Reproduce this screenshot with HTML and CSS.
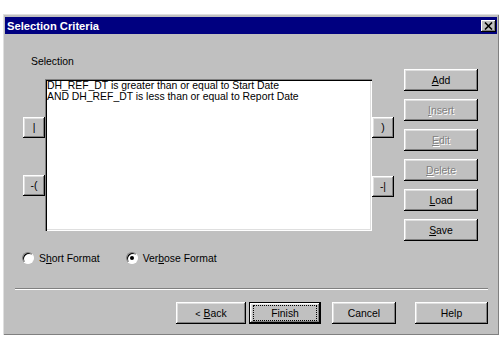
FILE: index.html
```html
<!DOCTYPE html>
<html>
<head>
<meta charset="utf-8">
<link rel="stylesheet" href="styles.css">
</head>
<body>
<div class="window">
  <div class="titlebar">
    <span class="title">Selection Criteria</span>
    <span class="close">
      <svg width="9" height="8" viewBox="0 0 9 8"><path d="M1 0.5 L8 7.5 M8 0.5 L1 7.5" stroke="#000" stroke-width="1.6" fill="none"/></svg>
    </span>
  </div>
  <div class="content">
    <div class="top">
      <div class="leftarea">
        <div class="label">Selection</div>
        <div class="listrow">
          <div class="sidebtns">
            <div class="btn small b1">|</div>
            <div class="btn small b2">-(</div>
          </div>
          <div class="list">
            <div class="line">DH_REF_DT is greater than or equal to Start Date</div>
            <div class="line">AND DH_REF_DT is less than or equal to Report Date</div>
          </div>
          <div class="sidebtns">
            <div class="btn small b1">)</div>
            <div class="btn small b2r">-|</div>
          </div>
        </div>
      </div>
      <div class="cmds">
        <div class="btn cmd"><span><u>A</u>dd</span></div>
        <div class="btn cmd disabled"><span><u>I</u>nsert</span></div>
        <div class="btn cmd disabled"><span><u>E</u>dit</span></div>
        <div class="btn cmd disabled"><span><u>D</u>elete</span></div>
        <div class="btn cmd"><span><u>L</u>oad</span></div>
        <div class="btn cmd"><span><u>S</u>ave</span></div>
      </div>
    </div>
    <div class="radios">
      <div class="radio"><span class="circle"></span><span>S<u>h</u>ort Format</span></div>
      <div class="radio r2"><span class="circle checked"></span><span>Ver<u>b</u>ose Format</span></div>
    </div>
    <div class="sep"></div>
    <div class="bottom">
      <div class="btn bb back"><span><span class="lt">&lt;</span> <u>B</u>ack</span></div>
      <div class="btn bb finish default"><span class="focus">Finish</span></div>
      <div class="btn bb cancel">Cancel</div>
      <div class="btn bb help">Help</div>
    </div>
  </div>
</div>
</body>
</html>
```
FILE: styles.css
```css
html, body {
  margin: 0;
  padding: 0;
  background: #ffffff;
}
body {
  font-family: "Liberation Sans", Arial, sans-serif;
  font-size: 10.4px;
  color: #000;
}
.window {
  margin-left: 3px;
  margin-top: 14px;
  width: 496px;
  height: 321px;
  box-sizing: border-box;
  padding: 3px 2px 2px 2px;
  background: #c0c0c0;
  box-shadow: inset 1px 1px #dfdfdf, inset -1px -1px #808080;
}
.titlebar {
  height: 17px;
  background: #000080;
  display: flex;
  align-items: center;
  justify-content: space-between;
  padding: 0 1px 0 2px;
}
.title {
  color: #fff;
  font-weight: bold;
  font-size: 11.2px;
}
.close {
  width: 15px;
  height: 12px;
  background: #c0c0c0;
  box-shadow: inset -1px -1px #000, inset 1px 1px #fff, inset -2px -2px #808080;
  display: flex;
  align-items: center;
  justify-content: center;
}
.btn {
  background: #c0c0c0;
  box-shadow: inset -1px -1px #000, inset 1px 1px #fff, inset -2px -2px #808080, inset 2px 2px #dfdfdf;
  display: flex;
  align-items: center;
  justify-content: center;
  height: 22px;
  box-sizing: border-box;
}
.top {
  display: flex;
  padding-left: 18px;
  align-items: flex-start;
}
.label {
  margin-top: 21px;
  margin-left: 8px;
  height: 13px;
  line-height: 13px;
}
.listrow {
  margin-top: 11px;
  display: flex;
  height: 152px;
}
.sidebtns {
  width: 22px;
  display: flex;
  flex-direction: column;
}
.small {
  width: 22px;
  height: 21px;
}
.b1 { margin-top: 38px; }
.b2 { margin-top: 37px; }
.b2r { margin-top: 38px; }
.list {
  width: 327px;
  height: 152px;
  box-sizing: border-box;
  background: #fff;
  box-shadow: inset 1px 1px #808080, inset 2px 2px #000, inset -1px -1px #fff, inset -2px -2px #dfdfdf;
  padding: 1px 0 0 2px;
}
.line {
  height: 11px;
  line-height: 11px;
  white-space: nowrap;
}
.cmds {
  margin-left: 10px;
  margin-top: 35px;
  display: flex;
  flex-direction: column;
  gap: 8px;
}
.cmd {
  width: 74px;
}
.disabled {
  color: #808080;
  text-shadow: 1px 1px #fff;
}
.radios {
  display: flex;
  margin-top: 10px;
  padding-left: 17px;
  height: 14px;
  align-items: center;
}
.radio {
  display: flex;
  align-items: center;
  gap: 5px;
}
.r2 {
  margin-left: 26px;
}
.circle {
  width: 12px;
  height: 12px;
  box-sizing: border-box;
  border-radius: 50%;
  background: #fff;
  border: 1px solid;
  border-color: #808080 #fff #fff #808080;
  box-shadow: inset 1px 1px #000;
  position: relative;
}
.checked::after {
  content: "";
  position: absolute;
  left: 3px;
  top: 3px;
  width: 4px;
  height: 4px;
  border-radius: 50%;
  background: #000;
}
.sep {
  margin-top: 23px;
  margin-left: 10px;
  width: 473px;
  height: 1px;
  background: #808080;
  border-bottom: 1px solid #fff;
}
.bottom {
  display: flex;
  margin-top: 12px;
}
.back { margin-left: 171px; width: 70px; }
.finish { margin-left: 3px; width: 72px; }
.cancel { margin-left: 11px; width: 64px; }
.help { margin-left: 19px; width: 73px; }
.lt {
  font-size: 9px;
}
.default {
  box-shadow: inset 0 0 0 1px #000, inset -2px -2px #000, inset 2px 2px #fff, inset -3px -3px #808080, inset 3px 3px #dfdfdf;
}
.focus {
  display: flex;
  align-items: center;
  justify-content: center;
  width: 62px;
  height: 14px;
  border: 1px dotted #000;
}
```
